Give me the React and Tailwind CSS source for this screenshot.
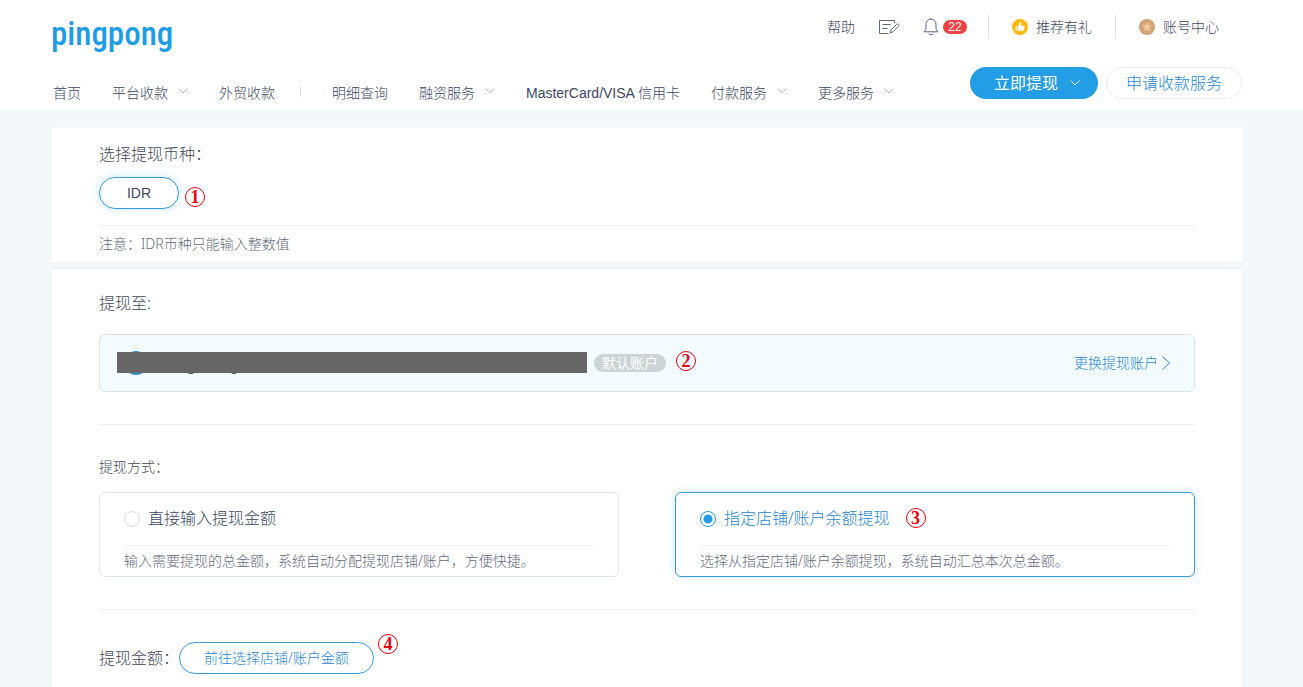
import React from "react";

const navItems = [
  { label: "首页" },
  { label: "平台收款", menu: true },
  { label: "外贸收款", divider: true },
  { label: "明细查询" },
  { label: "融资服务", menu: true },
  { label: "MasterCard/VISA 信用卡" },
  { label: "付款服务", menu: true },
  { label: "更多服务", menu: true },
];

function ChevronDown({ className }) {
  return (
    <svg viewBox="0 0 10 6" className={className} fill="none" stroke="currentColor" aria-hidden="true">
      <path d="M0.5 0.5 5 5 9.5 0.5" />
    </svg>
  );
}

function EditIcon() {
  return (
    <svg width="22" height="16" viewBox="0 0 22 16" fill="none" stroke="#5f667c" strokeLinejoin="round" aria-hidden="true">
      <path d="M16.5 4V1.5H1.5V14.5H10.5" />
      <path d="M4.500 5.500h8M4.500 9.500h5" />
      <path d="M12.300 14 13 10.800 18.800 5.200c.5-.4 1-.4 1.400 0l.5.6c.4.4.4.9 0 1.300L15 12.800Z" />
    </svg>
  );
}

function BellIcon() {
  return (
    <svg width="16" height="18" viewBox="0 0 16 18" fill="none" stroke="#5f667c" strokeLinejoin="round" strokeLinecap="round" aria-hidden="true">
      <path d="M8 1C5 1 3 3.4 3 6.3v3.9c0 1.2-.9 2.3-1.9 3.600h13.800c-1-1.300-1.900-2.400-1.900-3.600V6.300C13 3.400 11 1 8 1Z" />
      <path d="M5.800 16c1.100 1.100 3.300 1.100 4.400 0" />
    </svg>
  );
}

function ThumbIcon() {
  return (
    <svg width="16" height="16" viewBox="0 0 16 16" aria-hidden="true">
      <circle cx="8" cy="8" r="8" fill="#fdb913" />
      <path fill="#fff" d="M3.600 7.200h1.600v4.600H3.600zM5.900 7.100C7 6.500 7.600 5.200 7.700 3.700c.1-.6 1.700-.5 1.700.9 0 .8-.2 1.500-.4 2.100h2.700c.7 0 1 .5.9 1.100l-.8 3.200c-.1.500-.5.800-1 .8H5.900z" />
    </svg>
  );
}

function MedalIcon() {
  return (
    <svg width="16" height="16" viewBox="0 0 16 16" aria-hidden="true">
      <circle cx="8" cy="8" r="8" fill="#cf9f73" />
      <circle cx="8" cy="8" r="6" fill="#d9a679" />
      <path fill="#f3c99b" d="m8 3.500 1.300 2.800 3.100.4-2.300 2.100.6 3.100L8 10.400l-2.700 1.500.6-3.100-2.300-2.100 3.100-.4z" />
    </svg>
  );
}

function Step({ n, className = "" }) {
  return (
    <span
      className={`flex size-5 shrink-0 items-center justify-center rounded-full border border-[#e60012] font-['Liberation_Serif',serif] text-lg leading-4 font-bold text-[#e60012] ${className}`}
    >
      {n}
    </span>
  );
}

function Header() {
  return (
    <header className="bg-white pr-[61px] pl-[51px] whitespace-nowrap text-[#3c465f]">
      <div className="flex items-start justify-between pt-3">
        <a
          href="#home"
          className="font-['Roboto_Condensed','Roboto',sans-serif] text-[33px] leading-[44px] font-medium text-[#1f9ce6]"
        >
          pingpong
        </a>
        <div className="mt-[5px] flex h-5 items-center gap-[23px] pr-[23px] text-sm leading-5">
          <div className="-mr-0.5 flex items-center gap-[23px]">
            <a href="#help">帮助</a>
            <button type="button" aria-label="反馈">
              <EditIcon />
            </button>
            <a href="#messages" className="flex items-center gap-1">
              <BellIcon />
              <span className="flex h-3.5 w-6 items-center justify-center rounded-full bg-[#f04145] font-['Liberation_Sans',sans-serif] text-xs leading-3.5 font-normal text-white">
                22
              </span>
            </a>
          </div>
          <span className="h-6 w-px bg-[#e0e2e8]" />
          <a href="#refer" className="flex items-center gap-2">
            <ThumbIcon />
            推荐有礼
          </a>
          <span className="h-6 w-px bg-[#e0e2e8]" />
          <a href="#account" className="flex items-center gap-2">
            <MedalIcon />
            账号中心
          </a>
        </div>
      </div>
      <div className="flex items-start justify-between pt-[11px] pb-[7px]">
        <nav className="flex gap-[31px] pt-4 pl-0.5 font-['Liberation_Sans','Noto_Sans_CJK_SC',sans-serif] text-sm leading-5">
          {navItems.map((item) => (
            <div key={item.label} className="flex items-center">
              <a href="#nav">{item.label}</a>
              {item.menu && <ChevronDown className="mb-1 ml-2.5 h-1.5 w-2.5 text-[#b4b9c3]" />}
              {item.divider && <span className="mb-1 ml-[25px] h-3 w-px bg-[#dcdfe6]" />}
            </div>
          ))}
        </nav>
        <div className="flex gap-2 text-base">
          <button type="button" className="flex h-8 items-center gap-3 rounded-full bg-[#229de6] pr-[18px] pl-6 font-normal text-white">
            立即提现
            <ChevronDown className="h-1.5 w-2.5" />
          </button>
          <button type="button" className="h-8 rounded-full border border-[#e9ecf0] bg-white px-[19px] leading-[30px] text-[#1f86d0]">
            申请收款服务
          </button>
        </div>
      </div>
    </header>
  );
}

function Method({ id, title, text, checked, onSelect, step }) {
  return (
    <div
      className={`rounded-md border bg-white px-6 pt-[11px] ${
        checked ? "border-[#3a9bdc] shadow-[0_0_10px_rgba(34,157,230,0.22)]" : "border-[#e2e5ea]"
      }`}
    >
      <div className="flex h-7 items-center">
        <input
          id={id}
          type="radio"
          name="method"
          checked={checked}
          onChange={onSelect}
          className="mt-0.5 size-4 shrink-0 appearance-none rounded-full border border-[#d9dce2] bg-white checked:border-[#229de6] checked:bg-[radial-gradient(circle,#229de6_4px,#ffffff_5px)]"
        />
        <label htmlFor={id} className={`ml-2 text-base ${checked ? "text-[#1f86d0]" : "text-[#3c465f]"}`}>
          {title}
        </label>
        {step && <Step n={step} className="ml-4" />}
      </div>
      <p className="mt-[13px] border-t border-[#eceef1] text-sm leading-[30px] text-[#62697c]">{text}</p>
    </div>
  );
}

export default function App() {
  const [method, setMethod] = React.useState("shop");
  return (
    <div className="flex min-h-screen flex-col bg-[#f4f8fb] font-['Noto_Sans','Noto_Sans_CJK_SC',sans-serif] font-light text-[#3f475a]">
      <Header />
      <main className="flex flex-1 flex-col gap-[7px] pt-[18px] pr-[60px] pl-[51px]">
        <section className="bg-white px-12 pt-3.5 shadow-[0_0_3px_rgba(40,60,90,0.05)]">
          <h2 className="text-base">选择提现币种：</h2>
          <div className="mt-[11px] flex items-center gap-1.5">
            <button
              type="button"
              className="h-8 w-20 rounded-full border border-[#3a9bdc] bg-white font-['Liberation_Sans',sans-serif] text-sm shadow-[0_0_8px_rgba(34,157,230,0.25)]"
            >
              IDR
            </button>
            <Step n={1} className="mt-2" />
          </div>
          <p className="mt-4 border-t border-[#eceef1] text-sm leading-9 text-[#62697c]">注意：IDR币种只能输入整数值</p>
        </section>

        <section className="flex-1 bg-white px-12 pt-[22px] pb-3 shadow-[0_0_3px_rgba(40,60,90,0.08)]">
          <h2 className="text-base">提现至:</h2>
          <div className="mt-[19px] flex h-[58px] items-center rounded-md border border-[#dbe4ea] bg-[#f3fbff] pr-6 pl-[17px]">
            <svg width="470" height="24" viewBox="0 0 470 24" aria-hidden="true">
              <circle cx="19" cy="12" r="12" fill="#2f92cf" />
              <ellipse cx="74" cy="21" rx="3" ry="2" fill="#4b5366" />
              <ellipse cx="117" cy="21" rx="3" ry="2" fill="#4b5366" />
              <rect y="1" width="470" height="21" fill="#666" />
            </svg>
            <span className="ml-[7px] rounded-full bg-[#cdd4d7] px-2 text-sm leading-[18px] font-normal text-white">默认账户</span>
            <Step n={2} className="mb-1 ml-2.5" />
            <a href="#switch" className="ml-auto flex items-center gap-1 text-sm text-[#1f86d0]">
              更换提现账户
              <svg width="8" height="14" viewBox="0 0 8 14" fill="none" stroke="currentColor" aria-hidden="true">
                <path d="M0.500 0.500 7.500 7 0.500 13.500" />
              </svg>
            </a>
          </div>

          <div className="mt-8 border-t border-[#eceef1] pt-8">
            <h3 className="text-sm">提现方式：</h3>
            <div className="mt-[15px] grid grid-cols-2 gap-14">
              <Method
                id="method-total"
                title="直接输入提现金额"
                text="输入需要提现的总金额，系统自动分配提现店铺/账户，方便快捷。"
                checked={method === "total"}
                onSelect={() => setMethod("total")}
              />
              <Method
                id="method-shop"
                title="指定店铺/账户余额提现"
                text="选择从指定店铺/账户余额提现，系统自动汇总本次总金额。"
                checked={method === "shop"}
                onSelect={() => setMethod("shop")}
                step={3}
              />
            </div>
          </div>

          <div className="mt-8 flex items-center border-t border-[#eceef1] pt-8">
            <span className="text-base">提现金额：</span>
            <div className="relative">
              <button type="button" className="h-8 rounded-full border border-[#3a9bdc] bg-white px-6 text-sm text-[#1f86d0]">
                前往选择店铺/账户金额
              </button>
              <Step n={4} className="absolute -top-2 left-full ml-1" />
            </div>
          </div>
        </section>
      </main>
    </div>
  );
}
